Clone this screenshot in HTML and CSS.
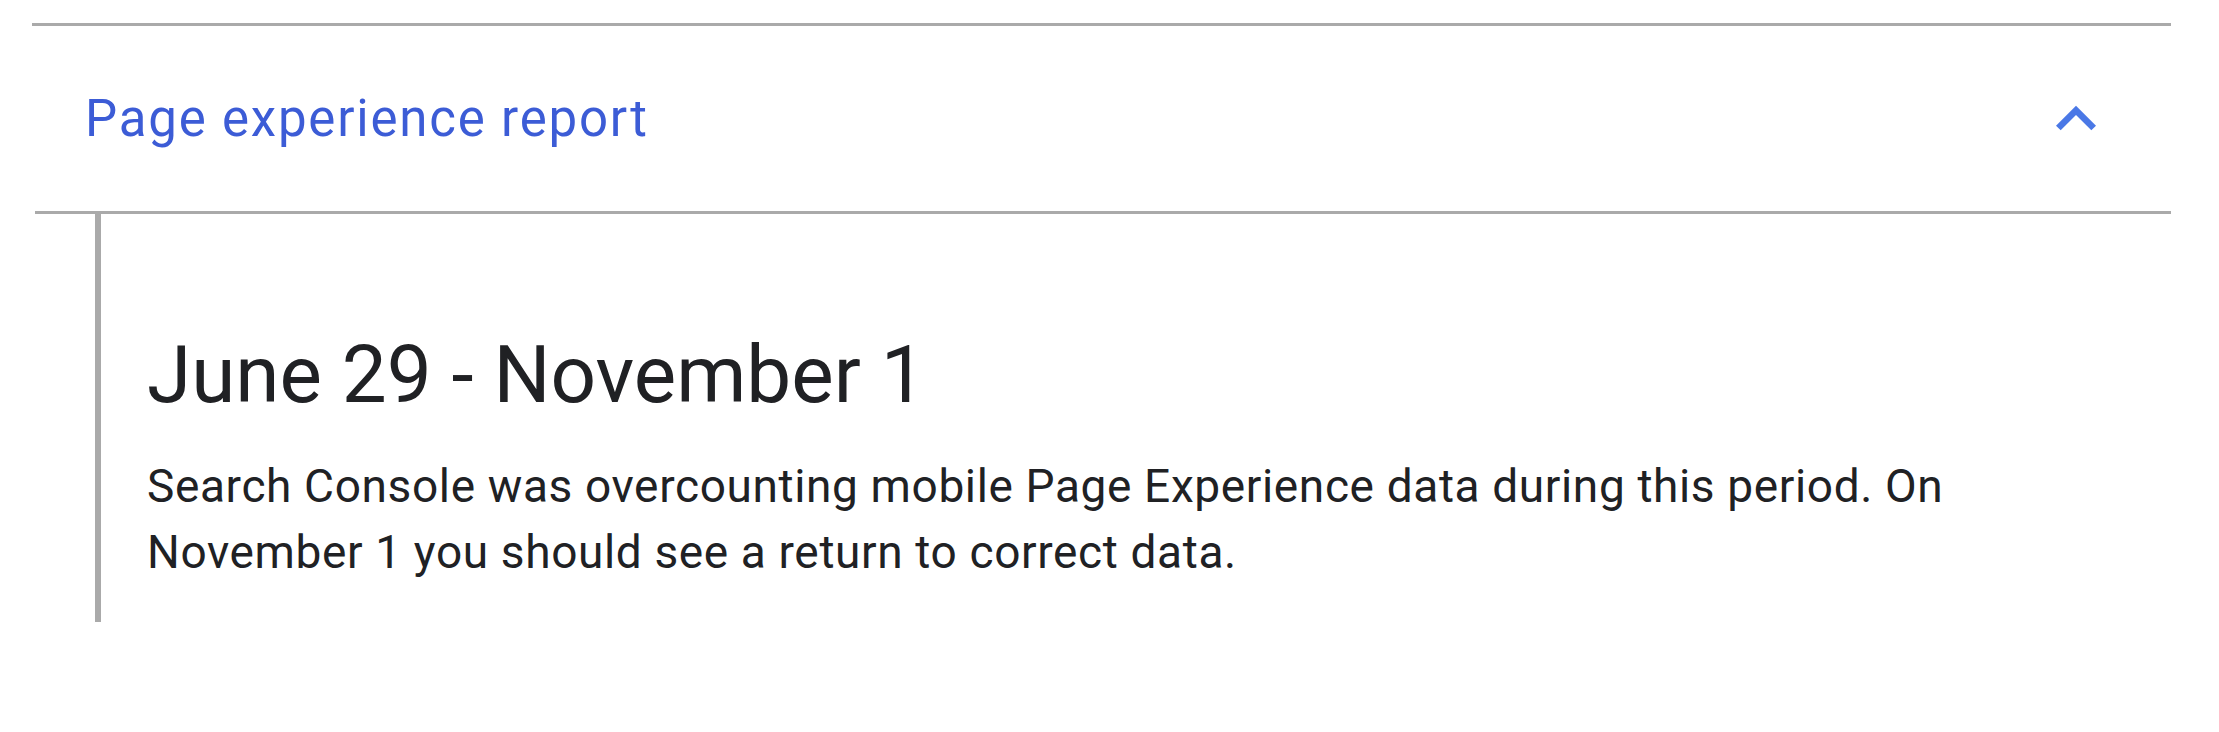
FILE: index.html
```html
<!DOCTYPE html>
<html lang="en">
<head>
<meta charset="utf-8">
<title>Page experience report</title>
<link rel="stylesheet" href="styles.css">
</head>
<body>
<section class="panel">
  <div class="panel-header">
    <h2 class="panel-title">Page experience report</h2>
    <svg class="chevron" viewBox="0 0 24 24" aria-hidden="true"><path d="M12 8l-6 6 1.41 1.41L12 10.83l4.59 4.58L18 14z"/></svg>
  </div>
  <div class="panel-body">
    <div class="entry">
      <h3 class="entry-date">June 29 - November 1</h3>
      <p class="entry-text">Search Console was overcounting mobile Page Experience data during this period. On November 1 you should see a return to correct data.</p>
    </div>
  </div>
</section>
</body>
</html>
```
FILE: styles.css
```css
html, body {
  margin: 0;
  padding: 0;
  background: #ffffff;
}

body {
  font-family: Roboto, "Liberation Sans", Arial, sans-serif;
  color: #202124;
}

.panel {
  margin: 23px 0 0 32px;
  width: 2139px;
}

.panel-header {
  display: flex;
  align-items: center;
  justify-content: space-between;
  height: 185px;
  border-top: 3px solid #aaaaaa;
  padding: 0 55px 0 53px;
}

.panel-title {
  margin: 0;
  font-size: 51px;
  font-weight: 400;
  letter-spacing: 1.8px;
  color: #3c5cd6;
}

.chevron {
  width: 80px;
  height: 80px;
  fill: #4a78e6;
}

.panel-body {
  margin-left: 3px;
  border-top: 3px solid #aaaaaa;
  padding-left: 60px;
  padding-bottom: 110px;
}

.entry {
  border-left: 6px solid #aaaaaa;
  padding: 113px 0 37px 46px;
}

.entry-date {
  margin: 0;
  font-size: 80px;
  font-weight: 400;
  line-height: 1.2;
}

.entry-text {
  margin: 30px 0 0 0;
  max-width: 1880px;
  font-size: 46px;
  line-height: 66px;
  letter-spacing: 0.63px;
}
```
